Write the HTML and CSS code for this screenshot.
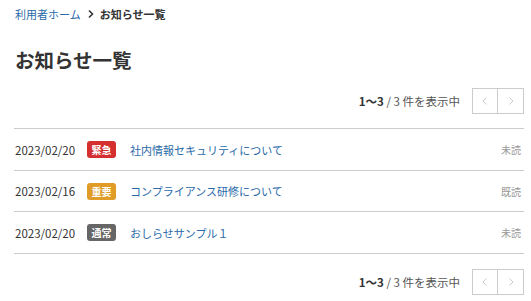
FILE: index.html
```html
<!DOCTYPE html>
<html lang="ja">
<head>
    <meta charset="UTF-8">
    <title>お知らせ一覧</title>
    <link rel="stylesheet" href="styles.css">
</head>
<body>
    <div class="page">
        <div class="breadcrumb">
            <a href="javascript:;">利用者ホーム</a>
            <span class="sep">
                <svg width="8" height="10" viewBox="0 0 8 10"><path d="M2 1.5 L5.5 5 L2 8.5" fill="none" stroke="#333" stroke-width="1.6"/></svg>
            </span>
            <b>お知らせ一覧</b>
        </div>

        <h1 class="title">お知らせ一覧</h1>

        <div class="pager">
            <span class="count"><b>1〜3</b> / 3 件を表示中</span>
            <div class="btns">
                <a href="javascript:;" class="btn">
                    <svg width="8" height="10" viewBox="0 0 8 10"><path d="M5.5 1.5 L2 5 L5.5 8.5" fill="none" stroke="#ccc" stroke-width="1"/></svg>
                </a>
                <a href="javascript:;" class="btn">
                    <svg width="8" height="10" viewBox="0 0 8 10"><path d="M2.5 1.5 L6 5 L2.5 8.5" fill="none" stroke="#ccc" stroke-width="1"/></svg>
                </a>
            </div>
        </div>

        <ul class="news">
            <li>
                <span class="date">2023/02/20</span>
                <span class="tag urgent">緊急</span>
                <a href="javascript:;" class="link">社内情報セキュリティについて</a>
                <span class="state">未読</span>
            </li>
            <li>
                <span class="date">2023/02/16</span>
                <span class="tag important">重要</span>
                <a href="javascript:;" class="link">コンプライアンス研修について</a>
                <span class="state">既読</span>
            </li>
            <li>
                <span class="date">2023/02/20</span>
                <span class="tag normal">通常</span>
                <a href="javascript:;" class="link">おしらせサンプル１</a>
                <span class="state">未読</span>
            </li>
        </ul>

        <div class="pager bottom">
            <span class="count"><b>1〜3</b> / 3 件を表示中</span>
            <div class="btns">
                <a href="javascript:;" class="btn">
                    <svg width="8" height="10" viewBox="0 0 8 10"><path d="M5.5 1.5 L2 5 L5.5 8.5" fill="none" stroke="#ccc" stroke-width="1"/></svg>
                </a>
                <a href="javascript:;" class="btn">
                    <svg width="8" height="10" viewBox="0 0 8 10"><path d="M2.5 1.5 L6 5 L2.5 8.5" fill="none" stroke="#ccc" stroke-width="1"/></svg>
                </a>
            </div>
        </div>
    </div>
</body>
</html>
```

FILE: styles.css
```css
*{
    margin: 0;
    padding: 0;
    box-sizing: border-box;
}
body{
    background: #fff;
    color: #333;
    font-family: "Noto Sans CJK JP", "Noto Sans", sans-serif;
}
a{
    text-decoration: none;
}
.page{
    padding: 6px 7px 0 14px;
}
.breadcrumb{
    display: flex;
    align-items: center;
    height: 16px;
    font-size: 11px;
    padding-left: 1px;
}
.breadcrumb a{
    color: #2a6aa8;
}
.breadcrumb .sep{
    display: inline-flex;
    margin: 0 5px 0 6px;
}
.breadcrumb b{
    color: #333;
}
.title{
    margin-top: 24px;
    padding-left: 1px;
    font-size: 19.5px;
    line-height: 28px;
    font-weight: bold;
    color: #333;
}
.pager{
    display: flex;
    justify-content: flex-end;
    align-items: center;
    margin-top: 14px;
    gap: 12px;
}
.pager.bottom{
    margin-top: 15px;
}
.count{
    font-size: 11.5px;
    color: #555;
}
.count b{
    color: #333;
}
.btns{
    display: flex;
}
.btn{
    display: flex;
    align-items: center;
    justify-content: center;
    width: 26px;
    height: 26px;
    border: 1px solid #ccc;
    background: #fff;
}
.btn + .btn{
    border-left: none;
}
.news{
    list-style: none;
    margin-top: 14px;
    border-top: 1px solid #ccc;
}
.news li{
    display: flex;
    align-items: center;
    height: 41.5px;
    border-bottom: 1px solid #ccc;
    padding: 1px 3px 0 1px;
}
.date{
    width: 72px;
    font-size: 11.5px;
    color: #333;
}
.tag{
    display: inline-block;
    width: 29px;
    height: 17px;
    line-height: 17px;
    border-radius: 3px;
    text-align: center;
    font-size: 10px;
    font-weight: bold;
    color: #fff;
    margin-right: 14px;
}
.urgent{
    background: #d3302f;
}
.important{
    background: #e09c26;
}
.normal{
    background: #666;
}
.link{
    flex: 1;
    font-size: 11px;
    color: #2a6aa8;
}
.state{
    font-size: 10px;
    color: #999;
}
```
